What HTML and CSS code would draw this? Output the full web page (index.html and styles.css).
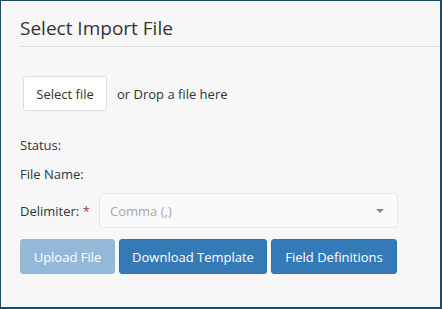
FILE: index.html
```html
<!DOCTYPE html>
<html>
<head>
<meta charset="utf-8">
<link rel="stylesheet" href="styles.css">
</head>
<body>
<div class="frame">
  <div class="header"><h2 class="title">Select Import File</h2></div>
  <div class="drop-row">
    <button class="btn btn-default">Select file</button>
    <span class="drop-text">or Drop a file here</span>
  </div>
  <div class="info-row">Status:</div>
  <div class="info-row info-row-2">File Name:</div>
  <div class="field-row">
    <label class="field-label">Delimiter: <span class="req">*</span></label>
    <div class="select">
      <span class="placeholder">Comma (,)</span>
      <span class="caret"></span>
    </div>
  </div>
  <div class="actions">
    <button class="btn btn-primary btn-upload" disabled>Upload File</button>
    <button class="btn btn-primary btn-download">Download Template</button>
    <button class="btn btn-primary btn-fields">Field Definitions</button>
  </div>
</div>
</body>
</html>
```
FILE: styles.css
```css
html, body {
  margin: 0;
  padding: 0;
}
body {
  font-family: "Open Sans", "Noto Sans", sans-serif;
  color: #333;
}
.frame {
  box-sizing: border-box;
  width: 442px;
  height: 309px;
  background: #f7f7f7;
  border-style: solid;
  border-color: #1d4a69;
  border-width: 1px 2px 2px 1px;
  padding-left: 19px;
  overflow: hidden;
}
.header {
  box-sizing: border-box;
  height: 46px;
  padding-top: 15px;
  border-bottom: 1px solid #dcdcdc;
}
.title {
  margin: 0;
  font-size: 19px;
  line-height: 24px;
  font-weight: 400;
  color: #333;
}
.drop-row {
  display: flex;
  align-items: center;
  margin-top: 29px;
  padding-left: 3px;
}
.btn {
  box-sizing: border-box;
  height: 35px;
  border-radius: 3px;
  font-family: inherit;
  font-size: 13px;
  cursor: pointer;
  padding: 0;
}
.btn-default {
  width: 84px;
  background: #fff;
  border: 1px solid #dedede;
  color: #333;
}
.drop-text {
  margin-left: 10px;
  font-size: 13px;
  color: #333;
}
.info-row {
  margin-top: 24px;
  font-size: 13px;
  line-height: 20px;
}
.info-row-2 {
  margin-top: 9px;
}
.field-row {
  display: flex;
  align-items: center;
  margin-top: 9px;
  font-size: 13px;
}
.field-label {
  width: 79px;
  flex: none;
}
.req {
  color: #a33a3a;
}
.select {
  box-sizing: border-box;
  width: 299px;
  height: 35px;
  display: flex;
  align-items: center;
  justify-content: space-between;
  padding: 0 13px 0 10px;
  background: #fafafa;
  border: 1px solid #e6e6e6;
  border-radius: 4px;
}
.placeholder {
  color: #a6a6a6;
}
.caret {
  width: 0;
  height: 0;
  border-left: 4px solid transparent;
  border-right: 4px solid transparent;
  border-top: 4px solid #888;
}
.actions {
  display: flex;
  gap: 4px;
  margin-top: 11px;
}
.btn-primary {
  border: 1px solid #2f73ad;
  background: #337ab7;
  color: #fff;
}
.btn-upload {
  width: 95px;
  background: #94b8d8;
  border-color: #94b8d8;
  cursor: not-allowed;
}
.btn-download {
  width: 148px;
}
.btn-fields {
  width: 126px;
}
```
